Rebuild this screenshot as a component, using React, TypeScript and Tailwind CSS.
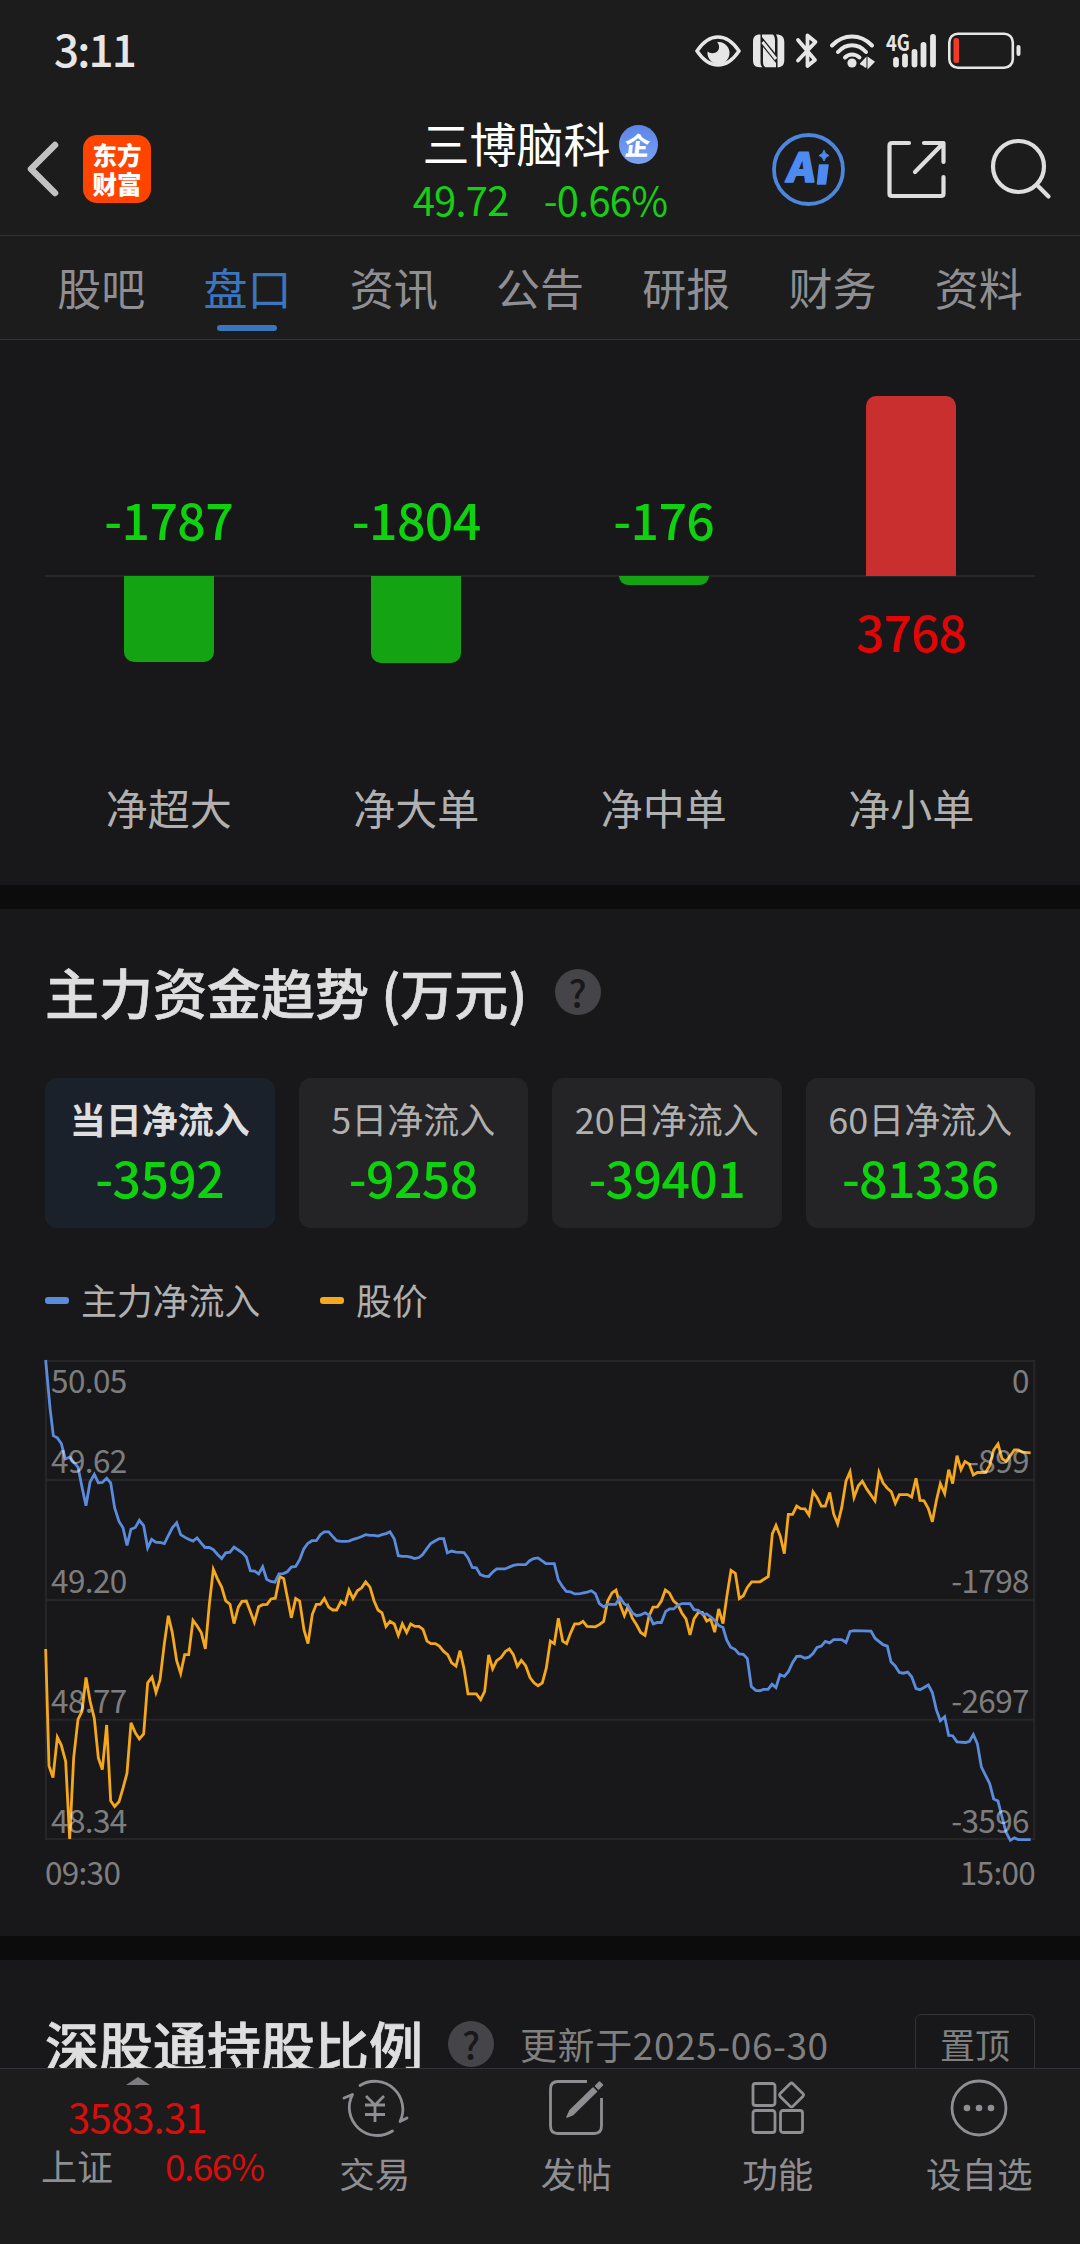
import { CSSProperties, ReactNode } from 'react'

const TABS = ['股吧', '盘口', '资讯', '公告', '研报', '财务', '资料']

// h = bar height in px
const ORDERS = [
  { label: '净超大', value: -1787, h: 86 },
  { label: '净大单', value: -1804, h: 87 },
  { label: '净中单', value: -176, h: 9 },
  { label: '净小单', value: 3768, h: 180 },
]

const PERIODS = [
  { label: '当日净流入', value: '-3592' },
  { label: '5日净流入', value: '-9258' },
  { label: '20日净流入', value: '-39401' },
  { label: '60日净流入', value: '-81336' },
]

const PRICE_TICKS = ['50.05', '49.62', '49.20', '48.77', '48.34']
const FLOW_TICKS = ['0', '-899', '-1798', '-2697', '-3596']

const FLOW_LINE =
  '47,56 60,190 70,268 82,274 94,290 106,333 119,328 131,342 144,356 156,412 168,464 180,398 193,376 205,400 217,399 230,387 242,400 254,470 267,508 279,526 291,575 303,530 316,525 328,505 341,520 353,582 365,558 377,566 390,567 403,570 415,548 427,526 440,512 452,545 464,552 476,558 489,563 501,554 513,568 525,581 538,581 550,587 562,600 575,612 587,596 600,594 612,580 625,588 637,596 649,608 661,646 674,647 686,655 698,635 710,670 722,676 735,678 747,655 760,654 772,649 784,636 797,634 809,615 821,586 833,570 846,562 859,562 871,545 883,537 896,537 908,550 920,562 933,564 945,564 957,563 970,558 982,555 995,550 1007,545 1020,547 1032,547 1044,549 1056,545 1068,542 1080,537 1093,557 1105,604 1117,606 1130,606 1142,608 1154,612 1167,609 1178,601 1190,585 1202,570 1215,563 1228,556 1241,556 1252,596 1265,591 1278,594 1302,595 1314,610 1327,637 1339,638 1351,657 1363,661 1376,662 1388,650 1400,641 1425,641 1450,631 1462,629 1487,629 1499,618 1511,612 1524,610 1548,626 1573,626 1585,672 1597,690 1609,704 1621,705 1634,711 1650,710 1672,706 1684,702 1696,710 1708,738 1721,747 1733,740 1757,740 1770,721 1782,738 1794,745 1807,764 1820,772 1832,770 1845,764 1857,770 1870,795 1882,791 1894,791 1907,760 1919,753 1931,753 1943,743 1956,738 1980,738 1992,755 2005,757 2017,768 2030,767 2042,775 2054,785 2067,800 2079,805 2090,840 2102,860 2115,866 2127,879 2140,880 2152,892 2164,970 2177,981 2189,982 2201,978 2214,978 2226,964 2238,973 2250,937 2263,942 2275,929 2288,903 2300,886 2312,885 2324,891 2337,888 2349,878 2361,861 2374,857 2386,844 2399,848 2411,839 2435,839 2448,847 2460,816 2472,814 2523,815 2535,835 2559,853 2572,857 2583,901 2595,912 2608,931 2620,933 2633,930 2645,943 2658,976 2670,979 2682,973 2695,966 2707,987 2719,1035 2731,1066 2744,1055 2756,1107 2768,1108 2781,1125 2806,1127 2818,1124 2830,1105 2842,1130 2854,1195 2867,1220 2879,1242 2891,1285 2904,1291 2916,1335 2928,1378 2941,1401 2953,1394 2965,1399 3002,1399'

const PRICE_LINE =
  '47,865 57,1193 69,1225 82,1112 94,1135 107,1180 119,1397 131,1170 144,1062 156,1040 168,945 180,1010 193,1060 205,1170 217,1203 230,1078 242,1290 254,1306 267,1293 279,1255 291,1213 303,1072 316,1100 328,1117 341,1103 353,960 366,944 378,987 390,952 403,850 415,772 427,820 440,898 452,934 464,881 476,881 489,785 501,800 514,820 526,865 538,740 550,642 562,668 575,692 587,730 600,740 612,794 625,748 636,732 649,731 661,760 673,790 686,747 698,741 711,740 723,725 736,723 749,662 761,668 773,725 784,778 797,724 809,731 822,812 834,850 847,768 859,740 871,740 883,724 896,748 908,756 920,756 933,732 945,740 957,700 969,724 982,702 995,694 1007,677 1020,692 1032,730 1044,756 1056,764 1068,802 1080,788 1093,795 1105,827 1117,795 1130,819 1142,795 1155,802 1167,802 1179,810 1191,843 1203,850 1216,850 1228,857 1241,872 1253,881 1265,904 1278,913 1290,870 1302,920 1314,991 1339,991 1352,1007 1364,984 1376,882 1388,921 1400,898 1413,889 1426,872 1438,865 1450,881 1462,914 1474,897 1487,912 1500,945 1512,960 1524,968 1537,960 1549,918 1561,843 1573,850 1585,779 1598,843 1610,850 1622,820 1634,795 1647,795 1659,788 1671,802 1696,803 1708,797 1721,788 1733,731 1746,708 1758,700 1770,740 1783,772 1794,746 1807,779 1820,798 1832,819 1845,827 1857,773 1869,748 1882,747 1894,731 1906,700 1918,708 1931,731 1943,740 1956,765 1968,781 1980,826 1992,781 2005,763 2017,763 2030,787 2042,781 2054,818 2066,753 2079,794 2091,715 2103,645 2116,653 2128,724 2140,716 2152,693 2165,677 2190,677 2215,662 2227,543 2238,519 2251,550 2263,598 2275,488 2288,488 2300,465 2312,472 2325,473 2337,490 2349,425 2361,441 2374,465 2386,465 2399,427 2411,487 2423,515 2435,470 2448,395 2460,369 2472,441 2485,408 2497,395 2510,417 2535,450 2547,371 2559,400 2572,415 2584,425 2596,457 2608,433 2633,433 2645,440 2658,387 2670,449 2682,450 2695,472 2707,509 2719,450 2731,402 2744,430 2756,363 2768,402 2781,324 2793,363 2805,340 2818,348 2830,378 2842,371 2867,371 2879,352 2891,308 2904,291 2916,332 2928,340 2941,324 2953,308 2965,308 2977,314 3002,316'

const fontStack: CSSProperties = { fontFamily: '"Noto Sans CJK SC", sans-serif' }

function StatusIcons() {
  return (
    <svg width="330" height="40" viewBox="692 30 330 40" fill="none" stroke="#e6e6e6">
      {/* eye */}
      <path d="M697 51C703 42 710 37 718 37S733 42 739 51C733 60 726 65 718 65S703 60 697 51Z" strokeWidth="3.4" />
      <path d="M719 42a11 11 0 1 1-11.400 9.500a7 7 0 0 0 4.500 1.800c4 .2 7-2.700 7-6.200c0-2-.6-3.700-2.100-4.900z" fill="#e6e6e6" stroke="none" />
      {/* nfc */}
      <path d="M760 34.500C755 34.500 753 37 753 42V60C753 65 755 67 760 67.300H762.500C761 66 760.500 64 760.500 62V34.500ZM777.500 67.300C782 67.300 784.300 65 784.300 60V42C784.300 37 782 34.500 776 34.500C777 36 777.500 38 777.500 40Z" fill="#e6e6e6" stroke="none" />
      <path d="M762 34.500H773C774.500 36 775 38 775 41V53L762 37ZM763 47L776 63V67.300H767C764 67.300 763 65 763 61Z" fill="#e6e6e6" stroke="none" />
      <path d="M762.500 42L776 59" strokeWidth="3" />
      {/* bluetooth */}
      <path d="M798 40L815 60L807.500 66V35.500L815.500 42L798 60.500" strokeWidth="3.800" strokeLinecap="round" strokeLinejoin="round" />
      {/* wifi */}
      <g strokeWidth="4" strokeLinecap="round">
        <path d="M832 45.500C843.500 33.500 860.500 33.500 872 45.500" />
        <path d="M838 52C846 43 858 43 866 52" />
        <path d="M845 57.500C849 53.500 855 53.500 859.500 57.500" />
      </g>
      <circle cx="852" cy="63" r="4.600" fill="#e6e6e6" stroke="none" />
      <path d="M860.500 64.500L865.500 59V67.500M868.500 58.500V67L873.500 62Z" strokeWidth="2" fill="#e6e6e6" />
      {/* signal */}
      <text x="886" y="50.500" fontSize="22" fontWeight="600" fill="#e6e6e6" stroke="none" textLength="24" lengthAdjust="spacingAndGlyphs">4G</text>
      <path d="M896 60V64.500M905 56.500V64.500M914.500 52V64.500M923.500 45V64.500M933 37V64.500" strokeWidth="5.800" strokeLinecap="round" />
      {/* battery */}
      <rect x="949.300" y="33.700" width="63.500" height="34" rx="8.500" strokeWidth="2.600" />
      <path d="M1018.500 47V54" strokeWidth="4" strokeLinecap="round" />
      <rect x="953.500" y="38" width="5.600" height="25" rx="2.500" fill="#f03a24" stroke="none" />
    </svg>
  )
}

function StatusBar() {
  return (
    <div className="flex h-[100px] items-start justify-between pt-[30px] pr-[58px] pl-[54px]">
      <span className="text-[44px] leading-[37px] font-medium tracking-[-1.800px] text-[#e6e6e6]">3:11</span>
      <StatusIcons />
    </div>
  )
}

function NavBar() {
  return (
    <div className="flex h-[136px] items-center border-b border-[#333335] pt-0.5 pr-7 pl-[24px]">
      <div className="flex w-[382px] items-center gap-[22px]">
        <svg width="37" height="62" viewBox="24 138 37 62" fill="none" stroke="#c2c2c2" strokeWidth="6.500" strokeLinecap="round" strokeLinejoin="round">
          <path d="M55 145L31 169L55 193" />
        </svg>
        <div className="flex h-[68px] w-[68px] flex-col items-center justify-center rounded-[14px] bg-[#ff4400] text-[24.500px] leading-[29px] font-black text-white">
          <span>东方</span>
          <span>财富</span>
        </div>
      </div>
      <div className="flex w-[268px] flex-col items-center">
        <div className="flex items-center gap-2">
          <span className="text-[47px] leading-[60px] text-white">三博脑科</span>
          <span className="mt-1 flex h-[39px] w-[39px] items-center justify-center rounded-full bg-gradient-to-b from-[#5b84e8] to-[#7ba3f2] text-[25px] leading-[30px] font-black text-white">
            <span className="-skew-x-6">企</span>
          </span>
        </div>
        <div className="mt-px flex gap-[35px] text-[40px] leading-[52px] tracking-[-0.8px] text-[#16ce16]">
          <span>49.72</span>
          <span>-0.66%</span>
        </div>
      </div>
      <svg className="ml-auto" width="284" height="80" viewBox="768 128 284 80" fill="none" stroke="#dedede" strokeWidth="4.200" strokeLinecap="round" strokeLinejoin="round">
        <circle cx="808.500" cy="168.500" r="34.500" stroke="#4c86dd" strokeWidth="3.800" />
        <g fill="#4d8bf0" stroke="#4d8bf0" strokeWidth="1.500">
          <text x="786" y="181.500" fontSize="40" fontWeight="900" textLength="28" lengthAdjust="spacingAndGlyphs" transform="translate(25 0) skewX(-8)">A</text>
          <path d="M819.500 164H828L825.500 183H817.500Z" />
          <path d="M824 149.500Q825 153.500 829 154.500Q825 155.500 824 160Q823 155.500 819 154.500Q823 153.500 824 149.500Z" strokeWidth="1" />
        </g>
        <path d="M909 142H892Q889.500 142 889.500 144.500V192.500Q889.500 195 892 195H941Q943.500 195 943.500 192.500V176" />
        <path d="M924 142H943.500V161M943 142.500L915 171" />
        <circle cx="1018.500" cy="165.500" r="25.500" />
        <path d="M1037 184L1048.500 195.500" />
      </svg>
    </div>
  )
}

function Tabs() {
  return (
    <div className="flex h-[104px] border-b border-[#333335] px-7">
      {TABS.map(tab => {
        const active = tab === '盘口'
        return (
          <div key={tab} className={`flex flex-1 flex-col items-center pt-[19px] text-[44px] leading-[64px] ${active ? 'text-[#3a75bd]' : 'text-[#8e8e93]'}`}>
            <span>{tab}</span>
            {active && <div className="mt-1.5 h-[6px] w-[60px] rounded-full bg-[#3a75bd]" />}
          </div>
        )
      })}
    </div>
  )
}

function OrderBars() {
  return (
    <div className="h-[545px] px-[45px] pt-[55px]">
      <div className="flex">
        {ORDERS.map(o => {
          const up = o.value > 0
          return (
            <div key={o.label} className="flex flex-1 flex-col items-center">
              <div className="flex h-[182px] w-full flex-col items-center justify-end border-b-2 border-[#262628]">
                {up
                  ? <div className="-mb-px w-[90px] rounded-t-[10px] bg-[#ca2f2f]" style={{ height: o.h }} />
                  : <span className="pb-[28px] text-[50px] leading-[58px] font-medium tracking-[-0.6px] text-[#0fd20f]">{o.value}</span>}
              </div>
              <div className="flex h-[203px] w-full flex-col items-center">
                {up
                  ? <span className="pt-[24px] text-[50px] leading-[58px] font-medium tracking-[-1px] text-[#e00606]">{o.value}</span>
                  : <div className="-mt-px w-[90px] rounded-b-[10px] bg-[#13a313]" style={{ height: o.h }} />}
              </div>
              <span className="text-[42px] leading-[54px] text-[#b0b0b0]">{o.label}</span>
            </div>
          )
        })}
      </div>
    </div>
  )
}

function HelpDot() {
  return (
    <span className="flex h-[46px] w-[46px] items-center justify-center rounded-full bg-[#454549] text-[37px] leading-[46px] font-medium text-[#18181a]">?</span>
  )
}

function LegendItem({ color, children }: { color: string; children: ReactNode }) {
  return (
    <div className="flex items-center gap-3">
      <div className={`mt-0.5 h-[7px] w-6 rounded-[3px] ${color}`} />
      <span className="text-[36px] leading-[44px] tracking-[-0.2px] text-[#b0b0b0]">{children}</span>
    </div>
  )
}

function TrendChart() {
  return (
    <div className="relative h-[480px]">
      <svg className="block h-full w-full overflow-visible" viewBox="45 56 2970 1344" preserveAspectRatio="none" fill="none">
        <g stroke="#262628" strokeWidth="2">
          <rect x="47.500" y="59" width="2965" height="1338" vectorEffect="non-scaling-stroke" />
          {[392, 728, 1063].map(y => (
            <path key={y} d={`M47 ${y}H3012`} vectorEffect="non-scaling-stroke" />
          ))}
        </g>
        <polyline points={PRICE_LINE} stroke="#f5a81c" strokeWidth="2.800" vectorEffect="non-scaling-stroke" />
        <polyline points={FLOW_LINE} stroke="#5a8bdc" strokeWidth="2.800" vectorEffect="non-scaling-stroke" />
      </svg>
      {/* axis labels sit over the lines */}
      <div className="absolute inset-x-0 -top-px flex justify-between pr-1.5 pl-1.5 text-[31.500px] leading-[40px] tracking-[-0.6px] text-white/45">
        {[PRICE_TICKS, FLOW_TICKS].map((ticks, i) => (
          <div key={i} className={`flex flex-col gap-20 ${i ? 'text-right' : ''}`}>
            {ticks.map((t, j) => <span key={t} className={j === 0 ? '-mb-10' : ''}>{t}</span>)}
          </div>
        ))}
      </div>
    </div>
  )
}

function TrendSection() {
  return (
    <div className="h-[1027px] px-[45px] pt-[50px]">
      <div className="flex h-[66px] items-center gap-[27px]">
        <h2 className="text-[54px] leading-[66px] font-medium text-[#dedede] [-webkit-text-stroke:0.7px_#dedede]">主力资金趋势 (万元)</h2>
        <HelpDot />
      </div>
      <div className="mt-[53px] flex gap-6">
        {PERIODS.map((p, i) => (
          <div key={p.label} className={`flex h-[150px] flex-1 flex-col items-center rounded-xl pt-[15px] ${i === 0 ? 'bg-[#1b212b]' : 'bg-[#242426]'}`}>
            <span className={`text-[36px] leading-[50px] whitespace-nowrap ${i === 0 ? 'font-bold text-[#dedede]' : 'text-[#b0b0b0]'}`}>{p.label}</span>
            <span className="mt-1 text-[50px] leading-[58px] font-medium tracking-[-0.6px] text-[#0fd20f]">{p.value}</span>
          </div>
        ))}
      </div>
      <div className="mt-[49px] flex gap-[60px]">
        <LegendItem color="bg-[#5a8bdc]">主力净流入</LegendItem>
        <LegendItem color="bg-[#f5a81c]">股价</LegendItem>
      </div>
      <div className="mt-[39px]">
        <TrendChart />
      </div>
      <div className="mt-[11px] flex justify-between text-[31.500px] leading-[40px] tracking-[-0.7px] text-[#7f7f80]">
        <span>09:30</span>
        <span>15:00</span>
      </div>
    </div>
  )
}

function HoldingSection() {
  return (
    <div className="flex h-[108px] items-start overflow-hidden px-[45px] pt-[52px]">
      <h2 className="text-[54px] leading-[66px] font-medium text-[#dedede] [-webkit-text-stroke:0.7px_#dedede]">深股通持股比例</h2>
      <div className="mt-[9px] ml-[25px]"><HelpDot /></div>
      <span className="mt-0.5 ml-[26px] text-[37px] leading-[60px] tracking-[0.6px] text-[#808080]">更新于2025-06-30</span>
      <div className="mt-0.5 ml-auto h-16 w-[120px] rounded-md border border-[#333335] text-center text-[35px] leading-[57px] text-[#808080]">置顶</div>
    </div>
  )
}

function BottomItem({ label, children }: { label: string; children: ReactNode }) {
  return (
    <div className="flex flex-1 flex-col items-center pt-2">
      <svg width="70" height="62" viewBox="-35 -31 70 62" fill="none" stroke="#8e8e93" strokeWidth="2.800" strokeLinecap="round" strokeLinejoin="round">
        {children}
      </svg>
      <span className="mt-2.5 text-[35.500px] leading-[47px] text-[#8e8e93]">{label}</span>
    </div>
  )
}

function BottomBar() {
  return (
    <div className="flex h-[176px] border-t border-[#333335] bg-[#1c1c1c]">
      <div className="w-[274px]">
        <svg className="mt-2 ml-[126px]" width="24" height="8" viewBox="0 0 24 8">
          <path d="M12 0L24 8H0Z" fill="#7c7c81" />
        </svg>
        <div className="mt-[4px] pl-[68px] text-[40px] leading-[54px] tracking-[-0.8px] text-[#d80e0e]">3583.31</div>
        <div className="flex gap-[52px] pl-[41px] text-[36px] leading-[44px]">
          <span className="text-[#8e8e93]">上证</span>
          <span className="text-[37px] tracking-[-1.500px] text-[#d80e0e]">0.66%</span>
        </div>
      </div>
      <BottomItem label="交易">
        <path d="M-15 -22.500A28 28 0 0 1 25 13.500L32 10M17.500 23A28 28 0 0 1 -22.500 -13.500L-31 -10" />
        <path d="M-9 -12L0 -3L9 -12M0 -3V14M-10 -3H10M-10 6.500H10" strokeLinecap="butt" />
      </BottomItem>
      <BottomItem label="发帖">
        <path d="M11 -26.500H-18Q-25.500 -26.500 -25.500 -19V18Q-25.500 25.500 -18 25.500H18Q25.500 25.500 25.500 18V-10" strokeLinecap="butt" />
        <path d="M-9 9L-6 2.500L17 -20L20.500 -16.500L-3 6.500ZM19.500 -22L23.500 -26L26.500 -23L22.500 -19Z" fill="#8e8e93" strokeWidth="1.500" />
      </BottomItem>
      <BottomItem label="功能">
        <rect x="-25" y="-24.500" width="22" height="22" rx="2.500" />
        <rect x="-25" y="2.500" width="22" height="22" rx="2.500" />
        <rect x="2.500" y="2.500" width="22" height="22" rx="2.500" />
        <rect x="4.500" y="-22" width="18" height="18" rx="2" transform="rotate(45 13.500 -13)" />
      </BottomItem>
      <BottomItem label="设自选">
        <circle r="27" />
        <g fill="#8e8e93" stroke="none">
          <circle cx="-12" r="3.300" />
          <circle r="3.300" />
          <circle cx="12" r="3.300" />
        </g>
      </BottomItem>
    </div>
  )
}

export default function App() {
  return (
    <div className="flex h-[2244px] w-[1080px] flex-col overflow-hidden bg-[#18181a]" style={fontStack}>
      <div className="bg-[#1c1c1c]">
        <StatusBar />
        <NavBar />
        <Tabs />
      </div>
      <OrderBars />
      <div className="h-6 bg-[#0c0c0c]" />
      <TrendSection />
      <div className="h-6 bg-[#0c0c0c]" />
      <HoldingSection />
      <BottomBar />
    </div>
  )
}
